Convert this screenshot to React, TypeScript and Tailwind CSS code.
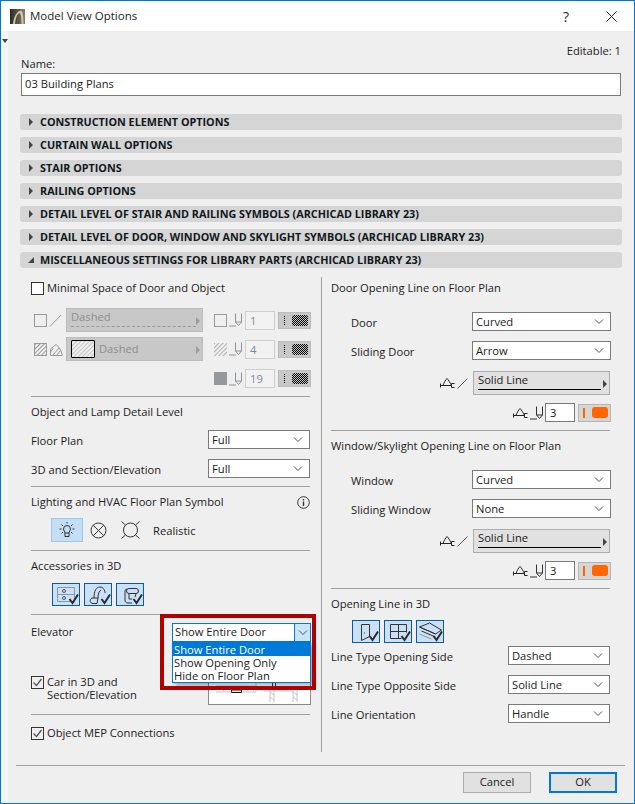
import React from "react";

const font = { fontFamily: '"Open Sans", "Noto Sans", sans-serif' };

const Chevron = ({ cls = "" }: { cls?: string }) => (
  <svg width="10" height="6" viewBox="0 0 10 6" className={cls} fill="none" stroke="#555" strokeWidth="1">
    <path d="M1 .5l4 4 4-4" />
  </svg>
);

const Sel = ({ value, w }: { value: string; w: string }) => (
  <div className={`${w} h-[19px] border border-[#7a7a7a] bg-white flex items-center justify-between pl-[3px] pr-[6px] leading-[15px] shrink-0`}>
    <span className="-mt-[1px]">{value}</span>
    <Chevron />
  </div>
);

const Row = ({ label, value, indent = false, wide = false }: { label: string; value: string; indent?: boolean; wide?: boolean }) => (
  <div className={`mt-[10px] h-[19px] flex items-center justify-between ${indent ? "pl-[20px]" : ""} ${wide ? "" : "pr-[1px]"}`}>
    <span className="mt-[4px]">{label}</span>
    <Sel value={value} w={wide ? "w-[139px]" : "w-[102px]"} />
  </div>
);

const Divider = ({ cls = "mt-[8px]" }: { cls?: string }) => <div className={`${cls} mr-[1px] h-px bg-[#a0a0a0] shrink-0`} />;

const Heading = ({ children }: { children: React.ReactNode }) => (
  <div className="mt-[7px] h-[16px] leading-[16px]">{children}</div>
);

const Pen = ({ c = "#333" }: { c?: string }) => (
  <svg width="14" height="14" viewBox="0 0 14 14" fill="none" stroke={c} strokeWidth="1" className="shrink-0">
    <path d="M6.500 .5v8.500l3 3.500 3-3.500V.5M6.500 9h6M0 13h7" />
  </svg>
);

const Swing = () => (
  <svg width="15" height="10" viewBox="0 0 15 10" fill="none" stroke="#222" strokeWidth="1" className="shrink-0">
    <path d="M.5 5.500v4M.5 7.500h3M3 7.500C4 4.500 5.500 2 7 .5c1.500 1.500 3 4 4.500 7H3M11.500 5.500h3M11.500 7.500v-2M11.500 9.500h3M11.500 7.500v2" />
  </svg>
);

const Checker = () => (
  <svg width="16" height="11" viewBox="0 0 16 11" className="shrink-0">
    <defs>
      <pattern id="chk" width="2" height="2" patternUnits="userSpaceOnUse">
        <rect width="1" height="1" fill="#000" />
        <rect x="1" y="1" width="1" height="1" fill="#000" />
      </pattern>
    </defs>
    <rect width="16" height="11" rx="2" fill="url(#chk)" />
  </svg>
);

const DimPenGroup = ({ value, swatch }: { value: string; swatch: React.ReactNode }) => (
  <div className="w-[97px] h-[19px] flex items-center shrink-0">
    <div className="w-[13px] h-[13px] shrink-0">{swatch}</div>
    <div className="ml-[2px]"><Pen c="#8f9396" /></div>
    <div className="ml-[2px] w-[30px] h-[19px] border border-[#cfcfcf] bg-[#f2f2f2] text-[#7d8a99] pl-[4px] leading-[17px] shrink-0">{value}</div>
    <div className="ml-[3px] w-[33px] h-[17px] bg-[#c8c8c8] border border-[#bcbcbc] flex items-center pl-[5px] gap-[7px] shrink-0">
      <div className="h-[9px] border-l border-dotted border-black" />
      <Checker />
    </div>
  </div>
);

const Hatch = ({ id, c = "#9a9a9a", bg = "none" }: { id: string; c?: string; bg?: string }) => (
  <svg width="100%" height="100%" className="block">
    <defs>
      <pattern id={id} width="3" height="3" patternUnits="userSpaceOnUse" patternTransform="rotate(45)">
        <rect width="3" height="3" fill={bg} />
        <rect width="1" height="3" fill={c} />
      </pattern>
    </defs>
    <rect width="100%" height="100%" fill={`url(#${id})`} />
  </svg>
);

const Check = ({ checked, white = false }: { checked?: boolean; white?: boolean }) => (
  <div className={`w-[13px] h-[13px] border border-[#333] shrink-0 ${white ? "bg-white" : "bg-[#f0f0f0]"}`}>
    {checked && (
      <svg width="11" height="11" viewBox="0 0 11 11" fill="none" stroke="#555" strokeWidth="1.300" className="block">
        <path d="M1.500 5.500l3 3 5-6.500" />
      </svg>
    )}
  </div>
);

const ToggleBtn = ({ children }: { children: React.ReactNode }) => (
  <div className="w-[28px] h-[23px] bg-[#c9e0f5] border border-[#0a5a9c] flex items-center justify-center shrink-0">{children}</div>
);

const Tick = () => <path d="M16.500 15l3 4 5.500-8.500" stroke="#2b2b2b" strokeWidth="2" fill="none" />;

const SolidBtn = () => (
  <div className="w-[137px] h-[24px] ml-[5px] mr-[1px] bg-[#e1e1e1] border border-[#adadad] relative pl-[4px] leading-[16px] shrink-0">
    <span>Solid Line</span>
    <div className="absolute left-[4px] right-[8px] bottom-[4px] h-px bg-black" />
    <div className="absolute right-[2px] top-[8px] w-0 h-0 border-y-[4px] border-y-transparent border-l-[4px] border-l-[#444]" />
  </div>
);

const LineBlock = () => (
  <div className="mt-[11px] h-[24px] flex items-center justify-end">
    <Swing />
    <svg width="11" height="11" viewBox="0 0 11 11" fill="none" stroke="#555" className="ml-[2px] mt-[1px] shrink-0"><path d="M.5 10.500l10-10" /></svg>
    <SolidBtn />
  </div>
);

const PenBlock = () => (
  <div className="mt-[8px] h-[19px] flex items-center justify-end">
    <Swing />
    <div className="ml-[2px]"><Pen /></div>
    <div className="ml-[1px] w-[30px] h-[19px] border border-[#7a7a7a] bg-white pl-[4px] leading-[17px] shrink-0">3</div>
    <div className="ml-[3px] w-[33px] h-[18px] bg-[#d6d6d6] border border-[#b5b5b5] flex items-center pl-[4px] gap-[7px] shrink-0">
      <div className="w-[2px] h-[10px] bg-[#ff6600]" />
      <div className="w-[16px] h-[11px] rounded-[3px] bg-[#ff6600]" />
    </div>
  </div>
);

const bars = [
  "CONSTRUCTION ELEMENT OPTIONS",
  "CURTAIN WALL OPTIONS",
  "STAIR OPTIONS",
  "RAILING OPTIONS",
  "DETAIL LEVEL OF STAIR AND RAILING SYMBOLS (ARCHICAD LIBRARY 23)",
  "DETAIL LEVEL OF DOOR, WINDOW AND SKYLIGHT SYMBOLS (ARCHICAD LIBRARY 23)",
  "MISCELLANEOUS SETTINGS FOR LIBRARY PARTS (ARCHICAD LIBRARY 23)",
];

export default function App() {
  return (
    <div style={font} className="relative w-[635px] h-[804px] border border-[#0078d7] bg-[#efefef] text-[11.200px] text-[#1c1c1c] flex flex-col overflow-hidden">
      {/* title bar */}
      <div className="h-[30px] bg-white flex items-center shrink-0 pl-[9px]">
        <svg width="15" height="15" viewBox="0 0 15 15">
          <defs>
            <linearGradient id="lg" x1="0" x2="1" y1="0" y2="0">
              <stop offset="0" stopColor="#2e2a22" />
              <stop offset="1" stopColor="#8a7f66" />
            </linearGradient>
          </defs>
          <rect width="15" height="15" fill="url(#lg)" />
          <path d="M3 15C4 7 7 2 11 1.500c2 1 2.500 7 2.500 13.500h-2C11.500 9 11 5 9.500 4 7 5 5.500 9 5 15z" fill="#cfc6ad" />
        </svg>
        <span className="ml-[5px] -mt-[1px] text-[11.500px]">Model View Options</span>
        <span className="ml-auto mr-[37px] text-[14px] text-[#222]">?</span>
        <svg width="11" height="11" viewBox="0 0 11 11" className="mr-[17px]" stroke="#222" fill="none"><path d="M.5.500l10 10M10.500.500l-10 10" /></svg>
      </div>

      {/* window edge strip and options triangle */}
      <div className="absolute left-0 top-[30px] bottom-0 w-[7px] bg-[#f4f4f4]" />
      <div className="absolute left-[1px] top-[38px] w-0 h-0 border-x-[3px] border-x-transparent border-t-[4px] border-t-[#444]" />

      <div className="relative flex flex-col pl-[19px] w-[621px]">
        <div className="mt-[12px] h-[12px] leading-[16px] text-right pr-[1px]">Editable: 1</div>
        <div className="h-[16px] leading-[18px] pl-[1px]">Name:</div>
        <div className="mt-[2px] ml-[1px] w-[600px] h-[23px] bg-white border border-[#7a7a7a] pl-[3px] leading-[20px]">03 Building Plans</div>
        <div className="mt-[18px] flex flex-col gap-[7px]">
          {bars.map((b, i) => (
            <div key={b} className="h-[16px] rounded-[3px] bg-[#d5d5d5] flex items-center relative">
              {i === 6 ? (
                <div className="absolute left-[8px] top-[5px] w-0 h-0 border-l-[6px] border-l-transparent border-b-[6px] border-b-[#444]" />
              ) : (
                <div className="absolute left-[9px] top-[4px] w-0 h-0 border-y-[4px] border-y-transparent border-l-[4px] border-l-[#444]" />
              )}
              <span className="ml-[20px] mt-[1px] font-bold text-[10.800px] text-[#101820]">{b}</span>
            </div>
          ))}
        </div>
      </div>

      {/* main two columns */}
      <div className="relative mt-[9px] ml-[30px] w-[580px] h-[475px] flex shrink-0">
        {/* left */}
        <div className="w-[280px] flex flex-col shrink-0">
          <div className="mt-[5px] h-[13px] flex items-center gap-[3px]">
            <Check white />
            <span>Minimal Space of Door and Object</span>
          </div>

          <div className="mt-[13px] h-[24px] flex items-center">
            <div className="ml-[3px] w-[13px] h-[13px] border border-[#9a9a9a] shrink-0" />
            <svg width="13" height="13" viewBox="0 0 13 13" fill="none" stroke="#9a9a9a" className="ml-[2px] shrink-0"><path d="M1 12.500L12 1" /></svg>
            <div className="ml-[4px] w-[137px] h-[24px] bg-[#c8c8c8] border border-[#bcbcbc] relative pl-[4px] leading-[15px] text-[#8f8f8f] shrink-0">
              Dashed
              <div className="absolute left-[4px] right-[6px] bottom-[4px] border-b border-dashed border-[#9a9a9a]" />
              <div className="absolute right-[2px] top-[8px] w-0 h-0 border-y-[4px] border-y-transparent border-l-[4px] border-l-[#9d9d9d]" />
            </div>
            <div className="ml-[11px]">
              <DimPenGroup value="1" swatch={<div className="w-full h-full border border-[#9a9a9a]" />} />
            </div>
          </div>

          <div className="mt-[5px] h-[24px] flex items-center">
            <div className="ml-[3px] w-[13px] h-[13px] border border-[#9a9a9a] shrink-0"><Hatch id="h1" /></div>
            <svg width="13" height="13" viewBox="0 0 13 13" fill="none" stroke="#9a9a9a" className="ml-[3px] shrink-0"><path d="M.5 12.500V6L6 1.500c3 2 5 6 6.500 11zM3 12l6-7M.5 9l3-4M7 12l3-4" /></svg>
            <div className="ml-[3px] w-[137px] h-[24px] bg-[#c8c8c8] border border-[#bcbcbc] relative flex items-center pl-[4px] text-[#8f8f8f] shrink-0">
              <div className="w-[24px] h-[18px] border border-black rounded-[1px] bg-[#efefef] shrink-0"><Hatch id="h2" c="#c4c4c4" /></div>
              <span className="ml-[4px]">Dashed</span>
              <div className="absolute right-[2px] top-[8px] w-0 h-0 border-y-[4px] border-y-transparent border-l-[4px] border-l-[#9d9d9d]" />
            </div>
            <div className="ml-[11px]">
              <DimPenGroup value="4" swatch={<Hatch id="h3" c="#b0b0b0" />} />
            </div>
          </div>

          <div className="mt-[8px] h-[19px] flex justify-end">
            <DimPenGroup value="19" swatch={<div className="w-full h-full bg-[#95999c]" />} />
          </div>

          <Divider />
          <Heading>Object and Lamp Detail Level</Heading>
          <Row label="Floor Plan" value="Full" />
          <Row label="3D and Section/Elevation" value="Full" />
          <Divider />
          <div className="mt-[7px] h-[16px] leading-[16px] flex items-center justify-between">
            <span>Lighting and HVAC Floor Plan Symbol</span>
            <svg width="13" height="13" viewBox="0 0 13 13" fill="none" stroke="#333" className="mr-[1px]"><circle cx="6.500" cy="6.500" r="5.800" /><path d="M6.500 5.500v4.500M6.500 3v1.500" strokeWidth="1.400" /></svg>
          </div>

          <div className="mt-[8px] h-[24px] flex items-center pl-[20px]">
            <div className="w-[32px] h-[24px] bg-[#c3def5] border border-[#99c9f0] flex items-center justify-center shrink-0">
              <svg width="18" height="17" viewBox="0 0 18 17" fill="none" stroke="#333" strokeWidth="1">
                <path d="M5.500 7a3.500 3.500 0 1 1 7 0c0 1.500-1.500 2.500-1.500 4H7c0-1.500-1.500-2.500-1.500-4zM7 11v3.500h4V11M9 0v1.500M1.500 7h2M14.500 7h2M3.500 2.500L5 4M14.500 2.500L13 4M3.500 11.500L5 10M14.500 11.500L13 10" />
              </svg>
            </div>
            <svg width="17" height="17" viewBox="0 0 17 17" fill="none" stroke="#333" className="ml-[7px] shrink-0"><circle cx="8.500" cy="8.500" r="7.500" /><path d="M3.200 3.200l10.600 10.600M13.800 3.200L3.200 13.800" /></svg>
            <svg width="21" height="18" viewBox="0 0 21 18" fill="none" stroke="#333" className="ml-[13px] shrink-0"><circle cx="10.500" cy="9" r="7" /><path d="M5.500 4L1.500.5M15.500 4l4-3.500M5.500 14l-4 3.500M15.500 14l4 3.500" /></svg>
            <span className="ml-[12px] mt-[2px]">Realistic</span>
          </div>

          <Divider />
          <Heading>Accessories in 3D</Heading>
          <div className="mt-[9px] h-[23px] flex gap-[4px] pl-[21px]">
            <ToggleBtn>
              <svg width="26" height="21" viewBox="0 0 26 21" fill="none" stroke="#8d979f">
                <path d="M4.500 3.500h17v14h-17zM4.500 10.500h17" />
                <circle cx="11" cy="7" r="1.500" stroke="#555" />
                <circle cx="11" cy="14" r="1.500" stroke="#555" />
                <Tick />
              </svg>
            </ToggleBtn>
            <ToggleBtn>
              <svg width="26" height="21" viewBox="0 0 26 21" fill="none" stroke="#333">
                <path d="M9 14c0-7 2-11 6-11 3 0 5 3 5 6M13 14c0-4 1-7 3-8M7 14h6l-1 5.500H8c-3 0-4-4-1-5.500z" />
                <Tick />
              </svg>
            </ToggleBtn>
            <ToggleBtn>
              <svg width="26" height="21" viewBox="0 0 26 21" fill="none" stroke="#333">
                <rect x="9.500" y="4.500" width="12" height="5" rx="2.500" />
                <path d="M10 5c-1.500 0-2 1-2 3v8c0 2 1 3 3 3h4M12 10v5h3M19 10l-1 3" />
                <Tick />
              </svg>
            </ToggleBtn>
          </div>
          <Divider />

          {/* elevator */}
          <div className="mt-[8px] h-[19px] flex items-center justify-between relative z-10">
            <span>Elevator</span>
            <div className="w-[139px] h-[19px] border border-[#0078d7] bg-white flex items-center relative shrink-0">
              <span className="pl-[2px] flex-1 -mt-[1px]">Show Entire Door</span>
              <div className="w-[16px] h-full bg-[#cce4f7] border-l border-[#0078d7] flex items-center justify-center"><Chevron /></div>
              <div className="absolute left-[-1px] top-[18px] w-[139px] h-[41px] bg-white border border-[#0078d7] leading-[13px] shadow-[3px_3px_4px_rgba(0,0,0,0.3)]">
                <div className="h-[13px] bg-[#0078d7] text-white pl-px">Show Entire Door</div>
                <div className="h-[13px] pl-px">Show Opening Only</div>
                <div className="h-[13px] pl-px">Hide on Floor Plan</div>
              </div>
            </div>
            <div className="absolute left-[129px] top-[-9px] w-[156px] h-[76px] border-[4px] border-[#b00000]" />
          </div>

          <div className="mt-[6px] h-[57px] flex justify-between">
            <div className="mt-[28px] flex items-start gap-[3px] leading-[13px]">
              <Check checked />
              <span className="-mt-[1px]">Car in 3D and<br />Section/Elevation</span>
            </div>
            <div className="w-[103px] h-[57px] border border-[#8a8a8a] bg-white shrink-0">
              <svg width="101" height="55" viewBox="0 0 101 55" fill="none" stroke="#c4c4c4">
                <path d="M7 37h40M7 43h40M47 33v10M61 37v16M65 37v16M55 42h10M84 37v16M88 37v16M65 42h19" />
                <path d="M61 43l4 3M61 48l4 3M84 43l4 3M84 48l4 3" />
                <path d="M12 38l3 4M20 38l3 4M36 38l3 4M42 38l3 4" />
                <path d="M22.500 38.500h10v5h-10zM22.500 41h10" stroke="#111" />
                <path d="M63.500 30v7M66.500 30v7" stroke="#333" />
              </svg>
            </div>
          </div>

          <Divider cls="mt-[9px]" />
          <div className="mt-[12px] h-[13px] flex items-center gap-[3px]">
            <Check checked />
            <span>Object MEP Connections</span>
          </div>
        </div>

        {/* vertical divider */}
        <div className="ml-[10px] w-px h-full bg-[#a0a0a0] shrink-0" />

        {/* right */}
        <div className="ml-[9px] w-[280px] flex flex-col shrink-0">
          <div className="mt-[3px] h-[16px] leading-[16px]">Door Opening Line on Floor Plan</div>
          <div className="h-[6px]" />
          <Row indent wide label="Door" value="Curved" />
          <Row indent wide label="Sliding Door" value="Arrow" />
          <LineBlock />
          <PenBlock />
          <Divider />
          <Heading>Window/Skylight Opening Line on Floor Plan</Heading>
          <div className="h-[6px]" />
          <Row indent wide label="Window" value="Curved" />
          <Row indent wide label="Sliding Window" value="None" />
          <LineBlock />
          <PenBlock />
          <Divider />
          <Heading>Opening Line in 3D</Heading>
          <div className="mt-[8px] h-[23px] flex gap-[4px] pl-[21px]">
            <ToggleBtn>
              <svg width="26" height="21" viewBox="0 0 26 21" fill="none" stroke="#333">
                <path d="M8.500 3.500h8v12l-8 4zM11 12h1" />
                <Tick />
              </svg>
            </ToggleBtn>
            <ToggleBtn>
              <svg width="26" height="21" viewBox="0 0 26 21" fill="none" stroke="#333">
                <path d="M5.500 3.500h16v8M5.500 3.500v14h11M5.500 10.500h16M13.500 3.500v14" />
                <Tick />
              </svg>
            </ToggleBtn>
            <ToggleBtn>
              <svg width="26" height="21" viewBox="0 0 26 21" fill="none" stroke="#333">
                <path d="M2.500 6l10-4 12 7-6 4zM2.500 6l16 7M4.500 10l14 6" />
                <path d="M2.500 13l12 5" stroke="#999" />
                <Tick />
              </svg>
            </ToggleBtn>
          </div>
          <div className="-mt-[7px]">
            <Row label="Line Type Opening Side" value="Dashed" />
          </div>
          <Row label="Line Type Opposite Side" value="Solid Line" />
          <Row label="Line Orientation" value="Handle" />
        </div>
      </div>

      {/* footer */}
      <div className="relative mt-[13px] ml-[15px] w-[609px] h-px bg-[#a0a0a0] shrink-0" />
      <div className="mt-[6px] flex justify-end gap-[18px] pr-[17px] relative">
        <div className="w-[68px] h-[21px] bg-[#e1e1e1] border border-[#adadad] flex items-center justify-center">Cancel</div>
        <div className="w-[68px] h-[21px] bg-[#e1e1e1] border-2 border-[#0078d7] flex items-center justify-center">OK</div>
      </div>
    </div>
  );
}
